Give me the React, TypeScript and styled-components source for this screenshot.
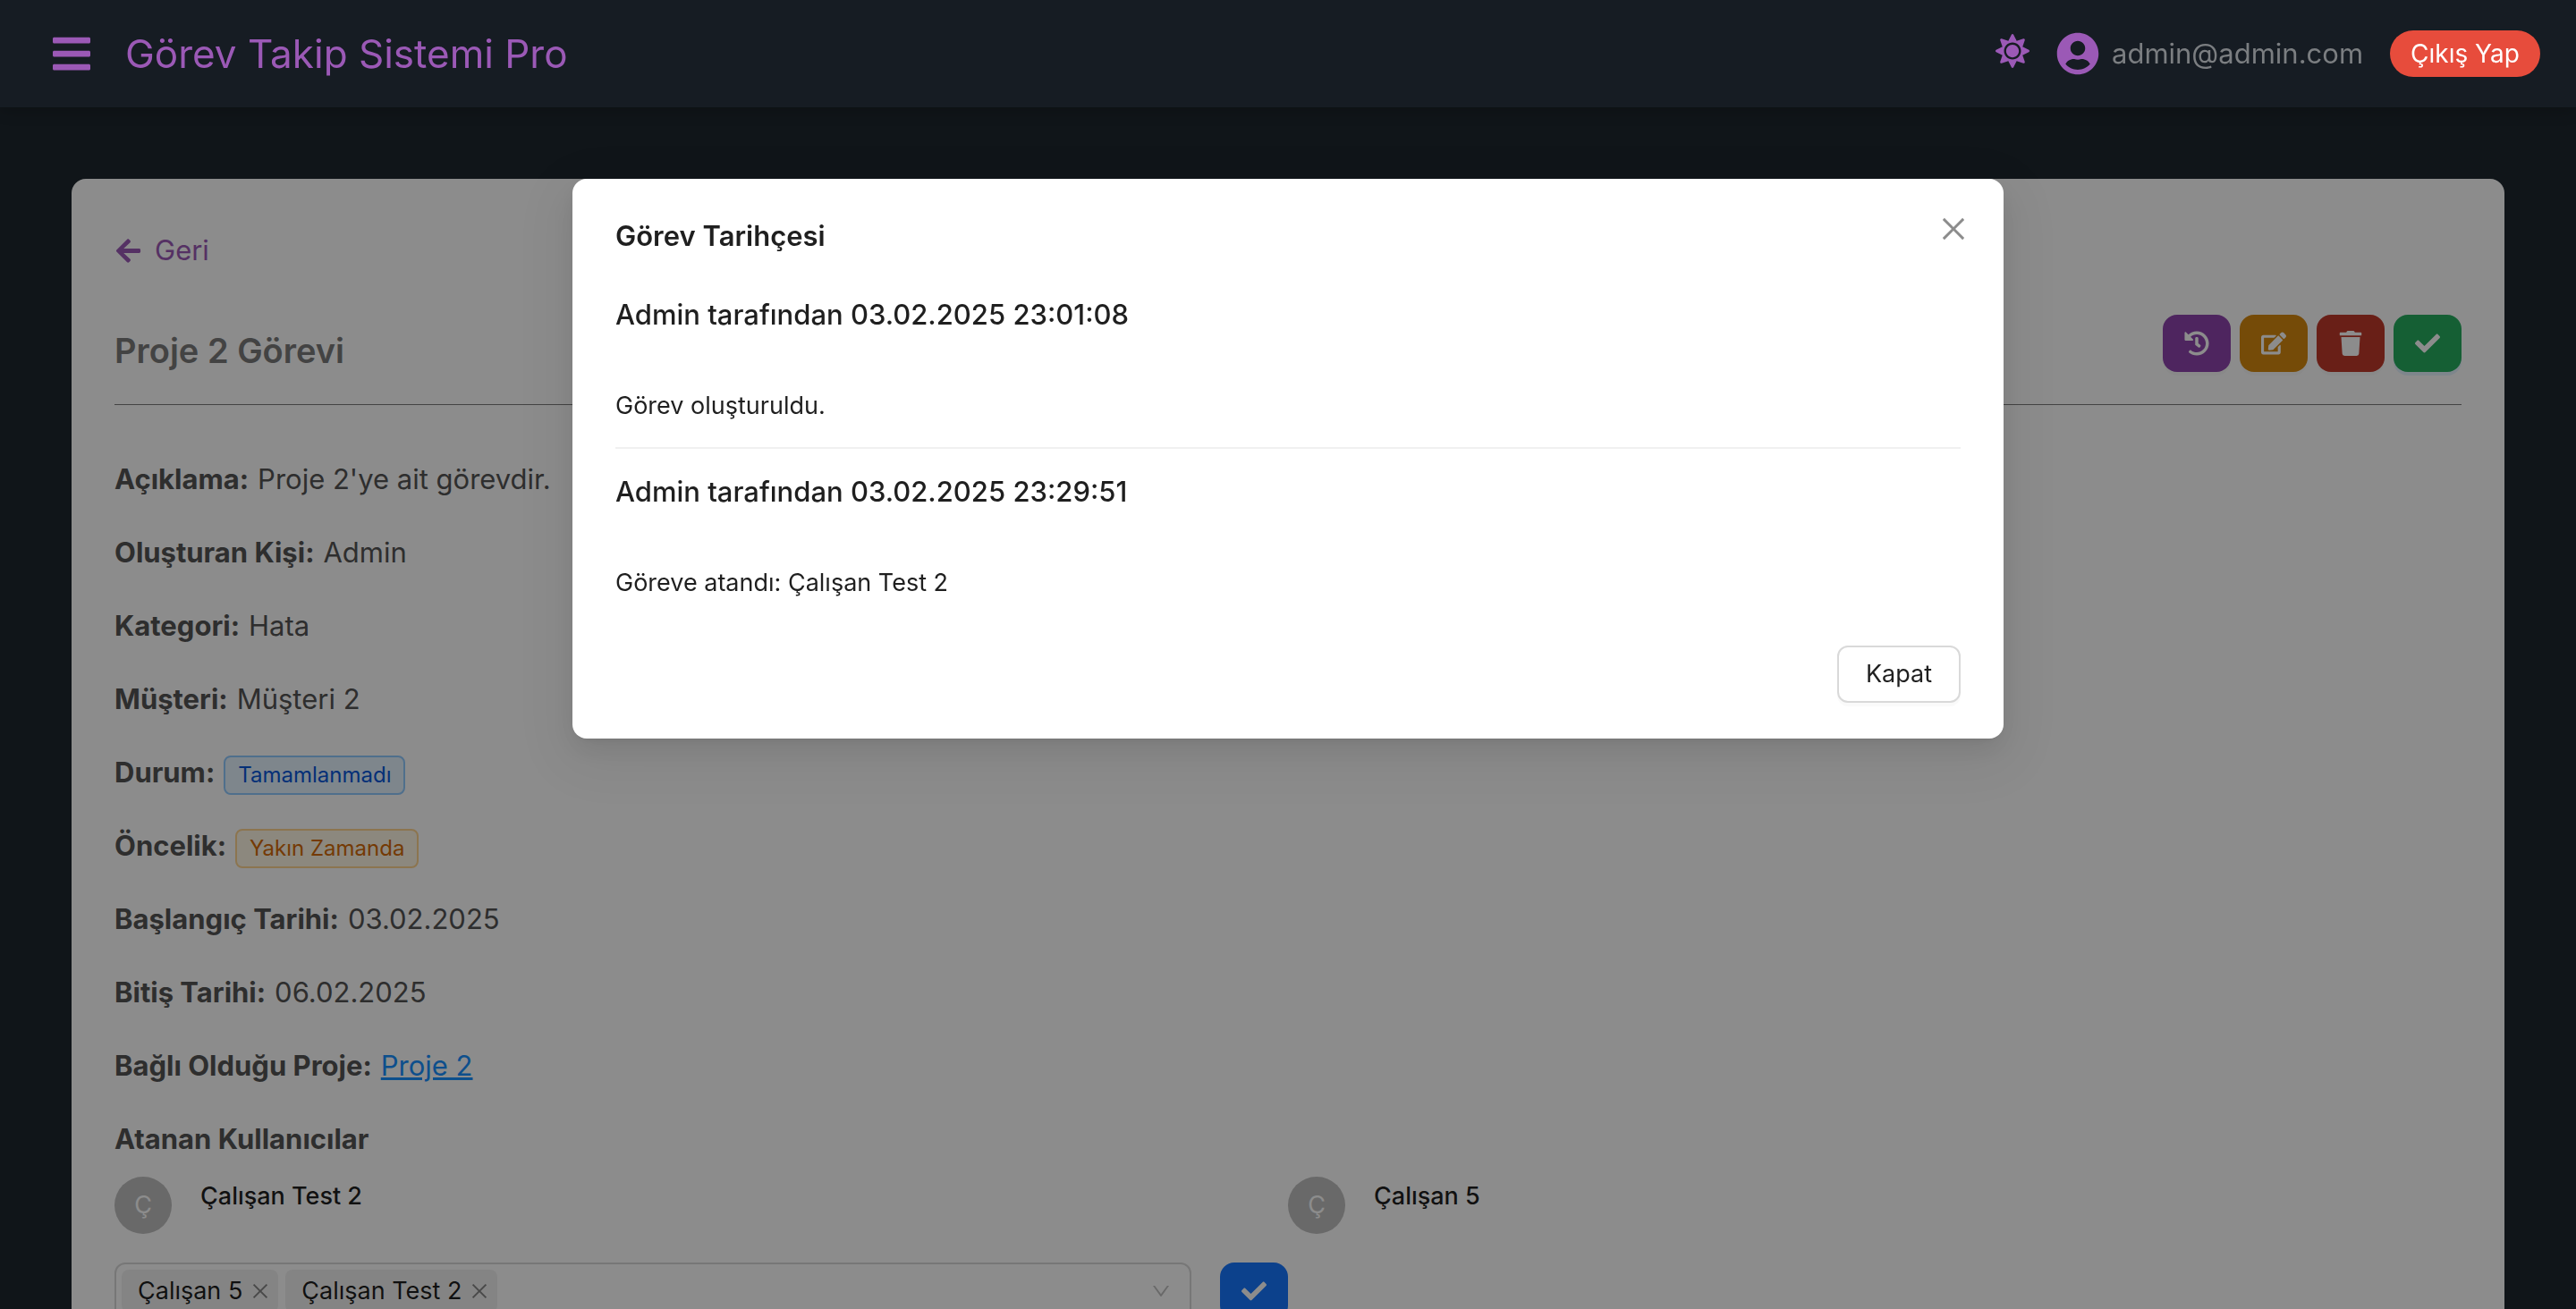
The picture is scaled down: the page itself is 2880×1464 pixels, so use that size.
import React from "react";
import styled, { createGlobalStyle } from "styled-components";
import {
  FaArrowLeft,
  FaBars,
  FaCheck,
  FaEdit,
  FaHistory,
  FaSun,
  FaTrash,
  FaUserCircle,
} from "react-icons/fa";
import { AiOutlineClose, AiOutlineDown } from "react-icons/ai";

const GlobalStyle = createGlobalStyle`
  *, *::before, *::after { box-sizing: border-box; }
  body {
    margin: 0;
    overflow: hidden;
    background: #1e272e;
    font-family: Inter, "Noto Sans", sans-serif;
    font-size: 27px;
    line-height: 44px;
  }
  button, input { font: inherit; }
  button { cursor: pointer; }
  h1, h2, h3, p, ul, dl, dd { margin: 0; padding: 0; }
  svg { display: block; }
`;

const Header = styled.header`
  position: relative;
  z-index: 20;
  display: flex;
  align-items: center;
  justify-content: space-between;
  height: 120px;
  padding: 0 40px 0 56px;
  background: #161c23;
  box-shadow: 0 4px 16px rgba(0, 0, 0, 0.2);
`;

const Brand = styled.div`
  display: flex;
  align-items: center;
  gap: 36px;
`;

const IconButton = styled.button<{ $size: number }>`
  display: flex;
  padding: 0;
  border: 0;
  background: none;
  color: #9b59b6;
  font-size: ${(p) => p.$size}px;
`;

const BrandName = styled.h1`
  color: #9b59b6;
  font-size: 44px;
  font-weight: 400;
  line-height: 60px;
`;

const Account = styled.div`
  display: flex;
  align-items: center;
  gap: 30px;
`;

const ThemeToggle = styled(IconButton)`
  margin-bottom: 6px;
`;

const User = styled.div`
  display: flex;
  align-items: center;
  gap: 14px;
  color: #7b7e81;
  font-size: 31px;

  svg {
    color: #9b59b6;
    font-size: 48px;
  }
`;

const Logout = styled.button`
  height: 52px;
  padding: 0 23px;
  border: 0;
  border-radius: 26px;
  background: #e74c3c;
  color: #fff;
  font-size: 28px;
`;

const Main = styled.main`
  padding: 80px;
`;

const Card = styled.section`
  min-height: 1400px;
  padding: 56px 48px 48px;
  border-radius: 16px;
  background: #fff;
`;

const BackLink = styled.a`
  display: flex;
  align-items: center;
  gap: 14px;
  width: fit-content;
  color: #9b59b6;
  font-size: 31px;
  line-height: 48px;
  text-decoration: none;
`;

const TaskHeader = styled.div`
  display: flex;
  align-items: flex-start;
  justify-content: space-between;
  margin-top: 48px;
  padding-bottom: 36px;
  border-bottom: 1px solid #7b7b7b;
`;

const TaskTitle = styled.h2`
  padding-top: 16px;
  color: #7b7b7b;
  font-size: 38px;
  font-weight: 600;
  line-height: 48px;
`;

const Actions = styled.div`
  display: flex;
  gap: 10px;
`;

const ActionButton = styled.button<{ $color: string; $primary?: boolean }>`
  display: flex;
  align-items: center;
  justify-content: center;
  flex: none;
  width: 76px;
  height: 64px;
  padding: 0;
  border: 0;
  border-radius: 16px;
  background: ${(p) => p.$color};
  box-shadow: 0 4px 0 ${(p) => (p.$primary ? "rgba(5, 145, 255, 0.1)" : "rgba(0, 0, 0, 0.02)")};
  color: #fff;
  font-size: 28px;
`;

const Details = styled.dl`
  display: flex;
  flex-direction: column;
  gap: 32px;
  margin-top: 58px;
  color: #555;
  font-size: 31px;
  line-height: 50px;
`;

const Detail = styled.div`
  display: flex;
  align-items: baseline;
  gap: 10px;
  height: 50px;

  dt { font-weight: 700; }
`;

const Tag = styled.span<{ $tone: "blue" | "orange" }>`
  display: inline-block;
  padding: 0 14px;
  border: 2px solid ${(p) => (p.$tone === "blue" ? "#91caff" : "#ffd591")};
  border-radius: 8px;
  background: ${(p) => (p.$tone === "blue" ? "#e6f4ff" : "#fff7e6")};
  color: ${(p) => (p.$tone === "blue" ? "#0958d9" : "#d46b08")};
  font-size: 24px;
  line-height: 40px;
`;

const ProjectLink = styled.a`
  color: #1890ff;
  text-decoration: underline;
`;

const AssigneesTitle = styled.h3`
  margin-top: 32px;
  color: #555;
  font-size: 31px;
  font-weight: 700;
  line-height: 50px;
`;

const Assignees = styled.ul`
  display: grid;
  grid-template-columns: 1fr 1fr;
  margin-top: 17px;
  list-style: none;
`;

const Assignee = styled.li`
  display: flex;
  gap: 32px;
  color: rgba(0, 0, 0, 0.88);
  font-weight: 500;
`;

const Avatar = styled.span`
  display: flex;
  align-items: center;
  justify-content: center;
  width: 64px;
  height: 64px;
  border-radius: 50%;
  background: #bfbfbf;
  color: #fff;
  font-weight: 400;
`;

const AssignForm = styled.form`
  display: flex;
  gap: 32px;
  width: 50%;
  margin-top: 32px;
`;

const MultiSelect = styled.div`
  display: flex;
  flex: 1;
  align-items: center;
  gap: 8px;
  height: 64px;
  padding: 0 20px 0 6px;
  border: 2px solid #d9d9d9;
  border-radius: 12px;
  color: rgba(0, 0, 0, 0.88);

  > svg {
    color: rgba(0, 0, 0, 0.25);
    font-size: 24px;
  }
`;

const Chosen = styled.span`
  display: flex;
  align-items: center;
  gap: 8px;
  height: 48px;
  padding: 0 8px 0 18px;
  border-radius: 8px;
  background: rgba(0, 0, 0, 0.06);
`;

const RemoveButton = styled.button`
  display: flex;
  padding: 0;
  border: 0;
  background: none;
  color: rgba(0, 0, 0, 0.45);
  font-size: 24px;
`;

const SearchInput = styled.input`
  flex: 1;
  min-width: 0;
  border: 0;
  outline: 0;
  background: none;
`;

const Mask = styled.div`
  position: fixed;
  inset: 0;
  z-index: 10;
  background: rgba(0, 0, 0, 0.45);
`;

const ModalWrap = styled.div`
  position: fixed;
  inset: 0;
  z-index: 30;
  display: flex;
  align-items: flex-start;
  justify-content: center;
  padding-top: 200px;
  pointer-events: none;
`;

const Modal = styled.section`
  width: 1600px;
  max-width: calc(100% - 64px);
  padding: 40px 48px;
  border-radius: 16px;
  background: #fff;
  box-shadow: 0 12px 32px rgba(0, 0, 0, 0.08), 0 6px 12px -8px rgba(0, 0, 0, 0.12),
    0 18px 56px 16px rgba(0, 0, 0, 0.05);
  color: rgba(0, 0, 0, 0.88);
  pointer-events: auto;
`;

const ModalHeader = styled.div`
  display: flex;
  align-items: flex-start;
  justify-content: space-between;
`;

const ModalTitle = styled.h2`
  font-size: 31px;
  font-weight: 600;
  line-height: 48px;
`;

const CloseButton = styled.button`
  display: flex;
  margin: -2px -10px 0 0;
  padding: 0;
  border: 0;
  background: none;
  color: rgba(0, 0, 0, 0.45);
  font-size: 36px;
`;

const History = styled.ul`
  margin-top: 16px;
  list-style: none;
`;

const HistoryItem = styled.li`
  padding: 24px 0;

  & + & { border-top: 2px solid #f0f0f0; }
`;

const HistoryTitle = styled.h3`
  font-size: 31px;
  font-weight: 500;
  line-height: 48px;
`;

const HistoryText = styled.p`
  margin-top: 56px;
`;

const ModalFooter = styled.div`
  display: flex;
  justify-content: flex-end;
  margin-top: 24px;
`;

const DefaultButton = styled.button`
  height: 64px;
  padding: 0 30px;
  border: 2px solid #d9d9d9;
  border-radius: 12px;
  background: #fff;
  box-shadow: 0 4px 0 rgba(0, 0, 0, 0.02);
  color: rgba(0, 0, 0, 0.88);
`;

const details: { label: string; value: React.ReactNode }[] = [
  { label: "Açıklama:", value: "Proje 2'ye ait görevdir." },
  { label: "Oluşturan Kişi:", value: "Admin" },
  { label: "Kategori:", value: "Hata" },
  { label: "Müşteri:", value: "Müşteri 2" },
  { label: "Durum:", value: <Tag $tone="blue">Tamamlanmadı</Tag> },
  { label: "Öncelik:", value: <Tag $tone="orange">Yakın Zamanda</Tag> },
  { label: "Başlangıç Tarihi:", value: "03.02.2025" },
  { label: "Bitiş Tarihi:", value: "06.02.2025" },
  { label: "Bağlı Olduğu Proje:", value: <ProjectLink href="#proje-2">Proje 2</ProjectLink> },
];

const actions = [
  { label: "Görev tarihçesi", color: "#8e44ad", icon: <FaHistory /> },
  { label: "Düzenle", color: "#d68910", icon: <FaEdit /> },
  { label: "Sil", color: "#c0392b", icon: <FaTrash /> },
  { label: "Tamamla", color: "#27ae60", icon: <FaCheck />, primary: true },
];

const assignees = ["Çalışan Test 2", "Çalışan 5"];
const selected = ["Çalışan 5", "Çalışan Test 2"];

const history = [
  { title: "Admin tarafından 03.02.2025 23:01:08", text: "Görev oluşturuldu." },
  { title: "Admin tarafından 03.02.2025 23:29:51", text: "Göreve atandı: Çalışan Test 2" },
];

export default function App() {
  return (
    <>
      <GlobalStyle />
      <Header>
        <Brand>
          <IconButton $size={48} aria-label="Menü">
            <FaBars />
          </IconButton>
          <BrandName>Görev Takip Sistemi Pro</BrandName>
        </Brand>
        <Account>
          <ThemeToggle $size={38} aria-label="Tema">
            <FaSun />
          </ThemeToggle>
          <User>
            <FaUserCircle />
            <span>admin@admin.com</span>
          </User>
          <Logout>Çıkış Yap</Logout>
        </Account>
      </Header>

      <Main>
        <Card>
          <BackLink href="#geri">
            <FaArrowLeft />
            Geri
          </BackLink>
          <TaskHeader>
            <TaskTitle>Proje 2 Görevi</TaskTitle>
            <Actions>
              {actions.map((a) => (
                <ActionButton
                  key={a.label}
                  $color={a.color}
                  $primary={a.primary}
                  aria-label={a.label}
                >
                  {a.icon}
                </ActionButton>
              ))}
            </Actions>
          </TaskHeader>
          <Details>
            {details.map((d) => (
              <Detail key={d.label}>
                <dt>{d.label}</dt>
                <dd>{d.value}</dd>
              </Detail>
            ))}
          </Details>
          <AssigneesTitle id="assignees-title">Atanan Kullanıcılar</AssigneesTitle>
          <Assignees>
            {assignees.map((name) => (
              <Assignee key={name}>
                <Avatar>{name[0]}</Avatar>
                {name}
              </Assignee>
            ))}
          </Assignees>
          <AssignForm>
            <MultiSelect>
              {selected.map((name) => (
                <Chosen key={name}>
                  {name}
                  <RemoveButton type="button" aria-label={`${name} kaldır`}>
                    <AiOutlineClose />
                  </RemoveButton>
                </Chosen>
              ))}
              <SearchInput role="combobox" aria-expanded={false} aria-labelledby="assignees-title" />
              <AiOutlineDown />
            </MultiSelect>
            <ActionButton type="button" $color="#1677ff" $primary aria-label="Kaydet">
              <FaCheck />
            </ActionButton>
          </AssignForm>
        </Card>
      </Main>

      <Mask />
      <ModalWrap>
        <Modal role="dialog" aria-modal="true" aria-labelledby="modal-title">
          <ModalHeader>
            <ModalTitle id="modal-title">Görev Tarihçesi</ModalTitle>
            <CloseButton aria-label="Kapat">
              <AiOutlineClose />
            </CloseButton>
          </ModalHeader>
          <History>
            {history.map((h) => (
              <HistoryItem key={h.title}>
                <HistoryTitle>{h.title}</HistoryTitle>
                <HistoryText>{h.text}</HistoryText>
              </HistoryItem>
            ))}
          </History>
          <ModalFooter>
            <DefaultButton>Kapat</DefaultButton>
          </ModalFooter>
        </Modal>
      </ModalWrap>
    </>
  );
}
